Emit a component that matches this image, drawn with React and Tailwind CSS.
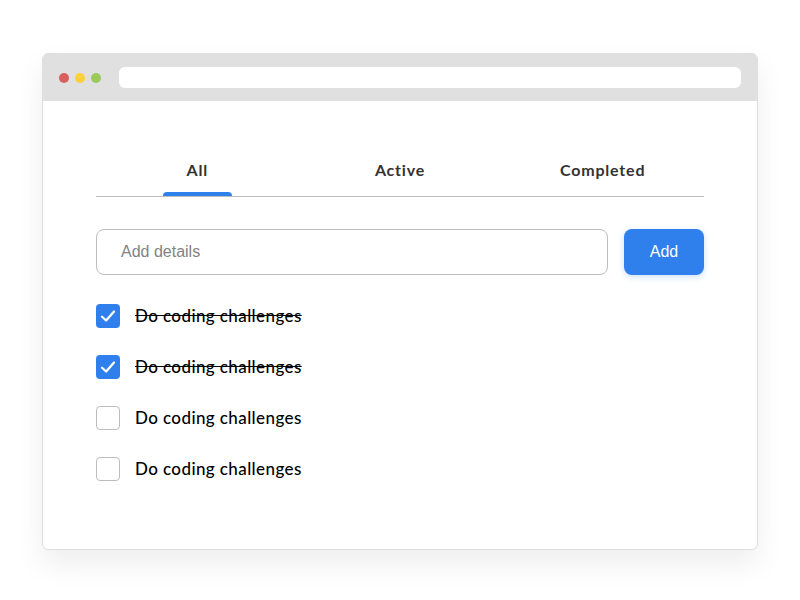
import React from 'react';

const tasks = [
    { text: 'Do coding challenges', done: true },
    { text: 'Do coding challenges', done: true },
    { text: 'Do coding challenges', done: false },
    { text: 'Do coding challenges', done: false },
];

function Checkbox({ checked }) {
    if (checked) {
        return (
            <div className="w-6 h-6 rounded-[4px] bg-[#2f80ed] flex items-center justify-center shrink-0">
                <svg width="18" height="18" viewBox="0 0 24 24" fill="none" stroke="white" strokeWidth="3" strokeLinecap="round" strokeLinejoin="round">
                    <polyline points="4 13 9.5 18 20 6" />
                </svg>
            </div>
        );
    }
    return <div className="w-6 h-6 rounded-[4px] border border-[#bdbdbd] bg-white shrink-0" />;
}

export default function App() {
    const tabs = ['All', 'Active', 'Completed'];
    return (
        <div className="w-[800px] h-[600px] bg-white pt-[53px] pl-[42px]">
            <div className="w-[716px] h-[497px] rounded-[6px] border border-[#dedede] bg-white overflow-hidden shadow-[0_14px_30px_rgba(0,0,0,0.07)]">
                <div className="h-[47px] bg-[#e0e0e0] flex items-center pl-[16px] pr-[16px]">
                    <div className="flex gap-[6px]">
                        <span className="w-[10px] h-[10px] rounded-full bg-[#d95f5f]" />
                        <span className="w-[10px] h-[10px] rounded-full bg-[#fcd03a]" />
                        <span className="w-[10px] h-[10px] rounded-full bg-[#9bc95a]" />
                    </div>
                    <div className="ml-[18px] flex-1 h-[21px] rounded-[6px] bg-white" />
                </div>

                <div className="px-[53px] pt-[59px]" style={{ fontFamily: 'Lato, "Noto Sans", sans-serif' }}>
                    <div className="grid grid-cols-3 border-b border-[#bdbdbd]">
                        {tabs.map((t, i) => (
                            <div key={t} className="flex flex-col items-center">
                                <span className="text-[16px] leading-[20px] font-bold tracking-[0.8px] text-[#333333]">{t}</span>
                                <span className={i === 0 ? "mt-[12px] w-[69px] h-[4px] rounded-t-[4px] bg-[#2f80ed]" : "mt-[12px] w-[69px] h-[4px]"} />
                            </div>
                        ))}
                    </div>

                    <div className="mt-[32px] flex gap-[16px]" style={{ fontFamily: '"Liberation Sans", Arial, sans-serif' }}>
                        <div className="flex-1 h-[46px] rounded-[8px] border border-[#bdbdbd] flex items-center pl-[24px] text-[16px] text-[#828282]">
                            Add details
                        </div>
                        <button className="w-[80px] h-[46px] rounded-[8px] bg-[#2f80ed] text-white text-[16px] shadow-[0_2px_6px_rgba(127,177,243,0.4)]">
                            Add
                        </button>
                    </div>

                    <div className="mt-[29px] flex flex-col gap-[27px]">
                        {tasks.map((task, i) => (
                            <div key={i} className="flex items-center gap-[15px] h-6">
                                <Checkbox checked={task.done} />
                                <span className={task.done ? "text-[17px] font-medium tracking-[0.4px] text-black line-through" : "text-[17px] font-medium tracking-[0.4px] text-black"}>
                                    {task.text}
                                </span>
                            </div>
                        ))}
                    </div>
                </div>
            </div>
        </div>
    );
}
